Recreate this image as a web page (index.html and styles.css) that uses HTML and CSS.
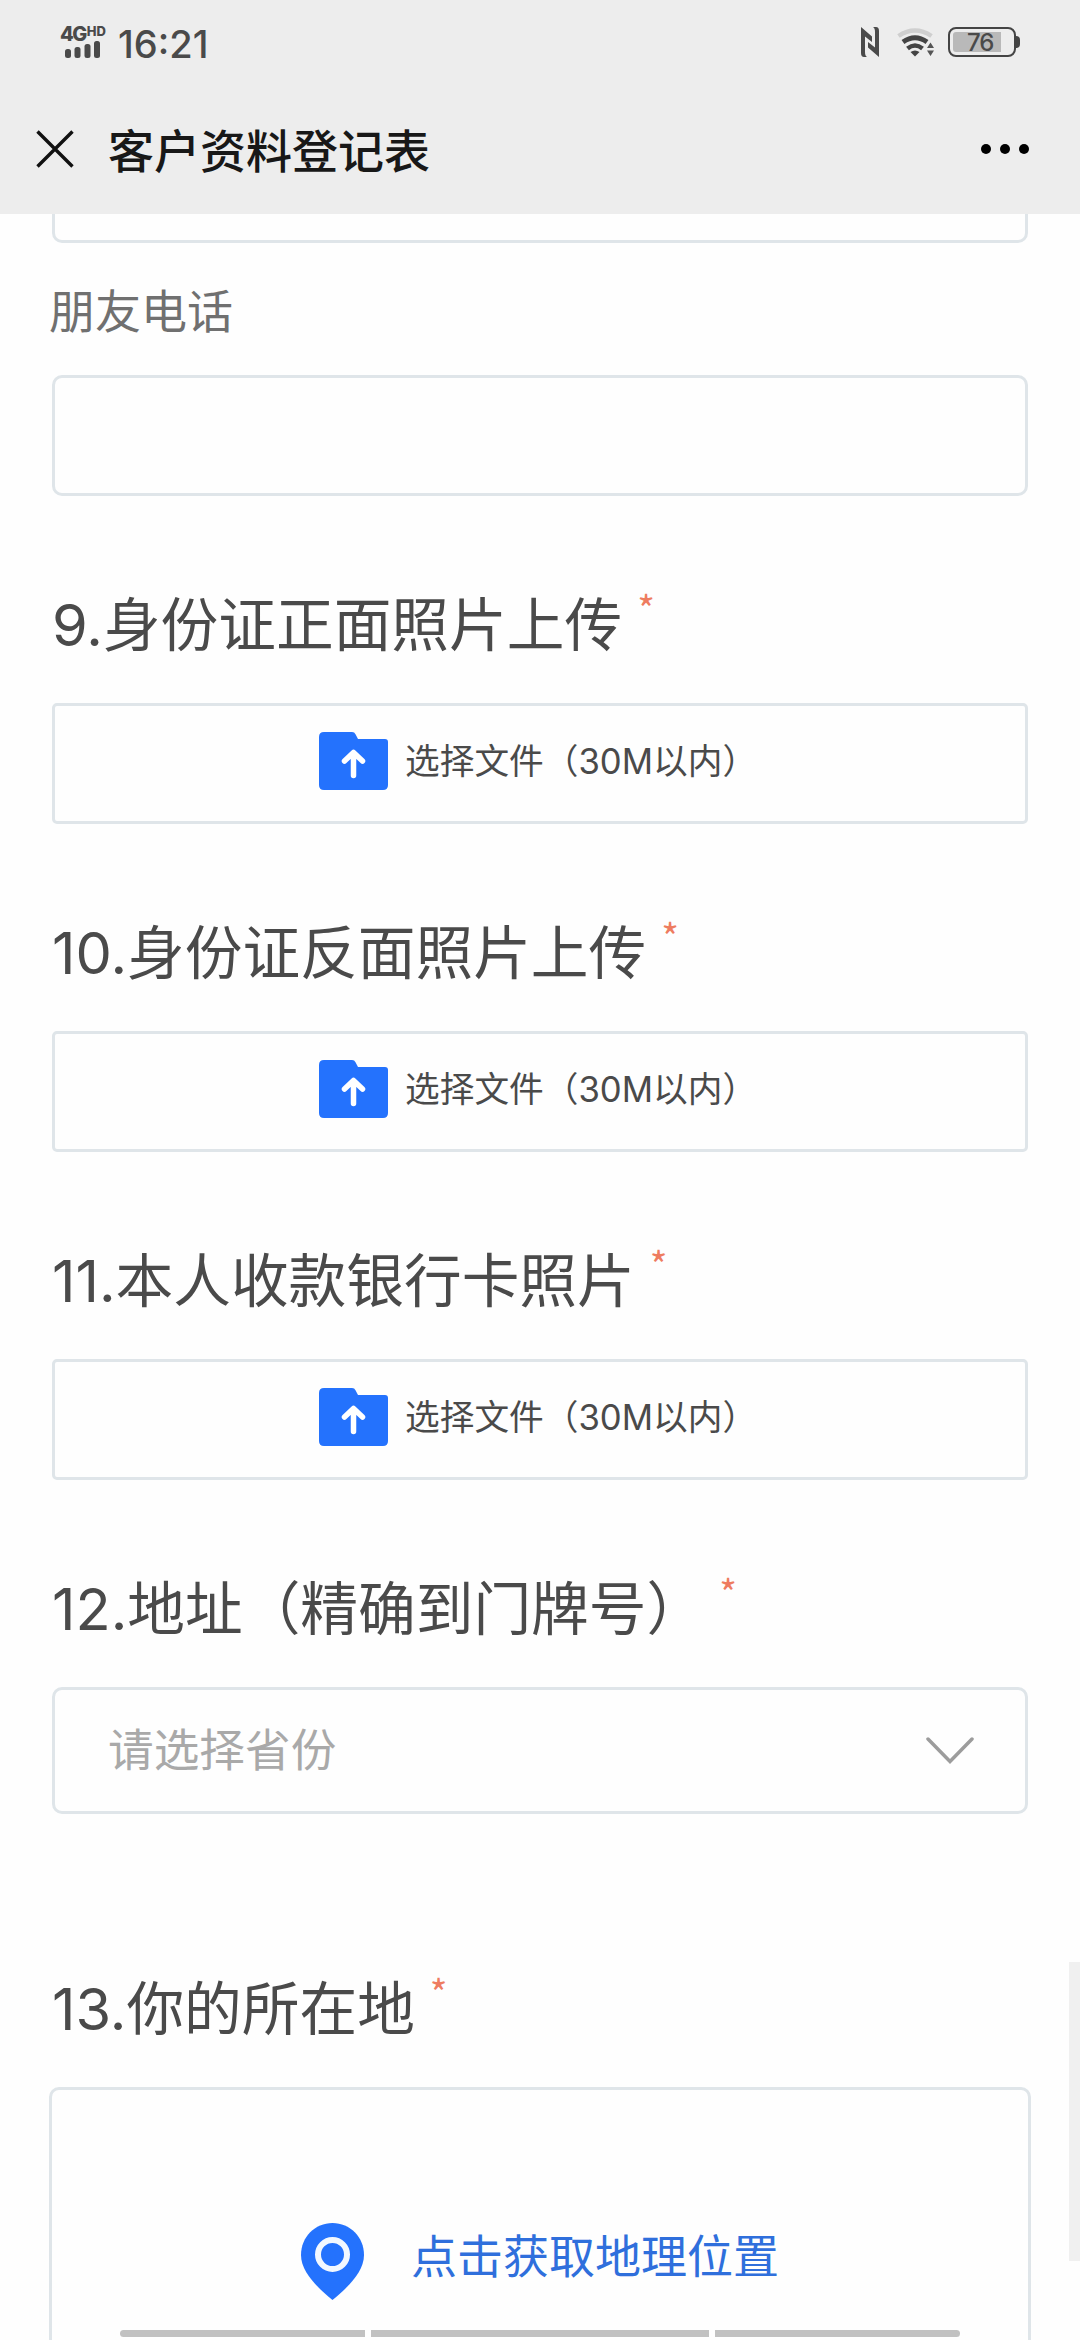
FILE: index.html
```html
<!DOCTYPE html>
<html lang="zh-CN">
<head>
  <meta charset="UTF-8" />
  <meta name="viewport" content="width=device-width,initial-scale=1.0">
  <title>客户资料登记表</title>
  <link rel="stylesheet" href="styles.css">
</head>
<body>
  <svg class="symbols" width="0" height="0">
    <symbol id="folder" viewBox="0 0 69 58">
      <path d="M5 0H33q2.500 0 3.500 2.200L39 7H66q3 0 3 3V53q0 5-5 5H5q-5 0-5-5V5q0-5 5-5z" fill="#2472fd"/>
      <path d="M34.500 43.500V21M25.500 29L34.500 20.500l9 8.500" fill="none" stroke="#fff" stroke-width="5.500" stroke-linecap="round" stroke-linejoin="round"/>
    </symbol>
  </svg>

  <header class="header">
    <div class="status">
      <div class="signal">
        <div class="network">4G<span class="hd">HD</span></div>
        <svg class="bars" width="36" height="17" viewBox="0 0 36 17" fill="#4a4a4a">
          <rect x="0" y="8" width="6" height="9" rx="2.500"/>
          <rect x="9.500" y="6" width="6" height="11" rx="2.500"/>
          <rect x="19.500" y="3" width="6" height="14" rx="2.500"/>
          <rect x="29" y="0" width="6" height="17" rx="2.500"/>
        </svg>
      </div>
      <span class="time">16:21</span>
      <svg class="nfc" width="18" height="30" viewBox="0 0 18 30" fill="#4a4a4a">
        <path d="M0 0L11 9.500V15L4 9.500V25q0 4 2 5H3q-3 0-3-4z"/>
        <path d="M18 30L7 20.500V15l7 5.500V5q0-4-2-5h3q3 0 3 4z"/>
      </svg>
      <svg class="wifi" width="38" height="30" viewBox="0 0 38 30" fill="none">
        <path d="M1.500 9Q18 -2 34.500 9" stroke="#cfcfcf" stroke-width="4.500"/>
        <path d="M6 15Q18 6.500 30 15" stroke="#444" stroke-width="5"/>
        <path d="M10.500 21.500Q18 15.500 25.500 21.500" stroke="#444" stroke-width="4.500"/>
        <path d="M13.500 25q4.500-3 9 0L18 29.500z" fill="#444"/>
        <path d="M33.500 15.500l3.500 5.500h-7zM33.500 29l3.500-5.500h-7z" fill="#555"/>
      </svg>
      <div class="battery"><div class="level">76</div></div>
    </div>
    <div class="navbar">
      <svg width="38" height="38" viewBox="0 0 38 38">
        <path d="M1.500 1.500l35 35M36.500 1.500l-35 35" stroke="#111" stroke-width="3.400"/>
      </svg>
      <h1 class="title">客户资料登记表</h1>
      <div class="more"><i></i><i></i><i></i></div>
    </div>
  </header>

  <main class="form">
    <div class="input cut"></div>
    <div class="label">朋友电话</div>
    <div class="input"></div>

    <h2 class="question">9.身份证正面照片上传<sup>*</sup></h2>
    <div class="upload"><svg width="69" height="58"><use href="#folder"/></svg><span>选择文件（30M以内）</span></div>

    <h2 class="question">10.身份证反面照片上传<sup>*</sup></h2>
    <div class="upload"><svg width="69" height="58"><use href="#folder"/></svg><span>选择文件（30M以内）</span></div>

    <h2 class="question">11.本人收款银行卡照片<sup>*</sup></h2>
    <div class="upload"><svg width="69" height="58"><use href="#folder"/></svg><span>选择文件（30M以内）</span></div>

    <h2 class="question">12.地址（精确到门牌号）<sup>*</sup></h2>
    <div class="select">
      <span>请选择省份</span>
      <svg width="48" height="27" viewBox="0 0 48 27">
        <path d="M2 2l22 22.500L46 2" fill="none" stroke="#9c9c9c" stroke-width="3.500" stroke-linecap="round"/>
      </svg>
    </div>

    <h2 class="question last">13.你的所在地<sup>*</sup></h2>
    <div class="location">
      <svg width="63" height="77" viewBox="0 0 63 77">
        <path d="M31.500 0C49 0 63 14 63 32C63 49 47 64 31.500 77C16 64 0 49 0 32C0 14 14 0 31.500 0z" fill="#2472fd"/>
        <circle cx="31.500" cy="31.500" r="14.500" fill="none" stroke="#f2f8ff" stroke-width="6"/>
      </svg>
      <span>点击获取地理位置</span>
    </div>
  </main>

  <div class="scrollbar"></div>
  <div class="gesture"><i></i><i></i><i></i></div>
</body>
</html>
```
FILE: styles.css
```css
* {
  box-sizing: border-box;
}

body {
  margin: 0;
  height: 2340px;
  overflow: hidden;
  position: relative;
  background: #fefefe;
  font-family: Inter, "Noto Sans CJK SC", sans-serif;
  color: #4a4a4a;
}

svg {
  display: block;
  flex: none;
}

.symbols {
  position: absolute;
}

.header {
  height: 214px;
  background: #ededed;
}

.status {
  display: flex;
  height: 84px;
  padding: 27px 60px 0 60px;
  align-items: flex-start;
}

.signal {
  width: 58px;
}

.network {
  display: flex;
  height: 14px;
  font-size: 20px;
  line-height: 15px;
  font-weight: 800;
  letter-spacing: -1.5px;
}

.hd {
  margin-left: 1px;
  font-size: 13px;
  line-height: 9px;
  letter-spacing: 0;
}

.bars {
  margin-left: 5px;
}

.time {
  font-size: 38px;
  line-height: 34px;
  font-weight: 500;
}

.nfc {
  margin-left: auto;
}

.wifi {
  margin-left: 18px;
}

.battery {
  position: relative;
  width: 68px;
  height: 30px;
  margin: 0 4px 0 13px;
  padding: 3px;
  border: 2px solid #444;
  border-radius: 8px;
}

.battery::after {
  content: "";
  position: absolute;
  right: -6px;
  top: 7px;
  width: 4px;
  height: 12px;
  border-radius: 0 4px 4px 0;
  background: #444;
}

.level {
  width: 48px;
  height: 20px;
  padding-left: 14px;
  border-radius: 3px 0 0 3px;
  background: #b9b9b9;
  font-size: 24px;
  font-weight: 500;
  line-height: 21px;
  letter-spacing: -1px;
}

.navbar {
  display: flex;
  height: 130px;
  padding: 0 51px 0 36px;
  align-items: center;
}

.title {
  margin: 0 0 0 34px;
  padding-top: 3px;
  font-size: 46px;
  line-height: 60px;
  font-weight: 500;
  color: #181818;
}

.more {
  display: flex;
  gap: 9px;
  margin-left: auto;
}

.more i {
  width: 10px;
  height: 10px;
  border-radius: 50%;
  background: #000;
}

.form {
  padding: 0 52px;
}

.input,
.upload,
.select,
.location {
  height: 121px;
  border: 3px solid #dfe5e9;
  border-radius: 10px;
}

.cut {
  height: 29px;
  border-top: 0;
  border-radius: 0 0 10px 10px;
}

.label {
  height: 132px;
  padding-top: 33px;
  font-size: 46px;
  line-height: 70px;
  color: #707070;
  margin-left: -3px;
}

.question {
  display: flex;
  height: 207px;
  margin: 0;
  padding-top: 87px;
  font-size: 57.700px;
  line-height: 84px;
  font-weight: 400;
  white-space: nowrap;
}

.question sup {
  margin-left: 15px;
  font-family: "Noto Sans CJK SC", sans-serif;
  font-size: 38px;
  line-height: 50px;
  color: #ee7c60;
}

.upload {
  display: flex;
  padding: 26px 0 0 264px;
  border-radius: 5px;
}

.upload span {
  margin-left: 17px;
  font-size: 34.700px;
  line-height: 58px;
}

.select {
  display: flex;
  height: 127px;
  padding: 0 51px 0 53px;
  align-items: center;
  justify-content: space-between;
  font-size: 45.700px;
  line-height: 60px;
  color: #a9a9a9;
}

.last {
  height: 273px;
  padding-top: 153px;
}

.location {
  display: flex;
  height: 290px;
  margin: 0 -3px;
  padding: 133px 0 0 249px;
}

.location span {
  margin-left: 47px;
  font-size: 46px;
  line-height: 66px;
  color: #2f6fdc;
}

.scrollbar {
  position: absolute;
  right: 0;
  top: 1962px;
  width: 11px;
  height: 299px;
  background: #f0f0f0;
}

.gesture {
  position: absolute;
  left: 120px;
  top: 2330px;
  display: flex;
  gap: 6px;
}

.gesture i {
  width: 245px;
  height: 7px;
  border-radius: 4px 0 0 4px;
  background: #c1c1c1;
}

.gesture i:nth-child(2) {
  width: 338px;
  border-radius: 0;
}

.gesture i:last-child {
  border-radius: 0 4px 4px 0;
}
```
